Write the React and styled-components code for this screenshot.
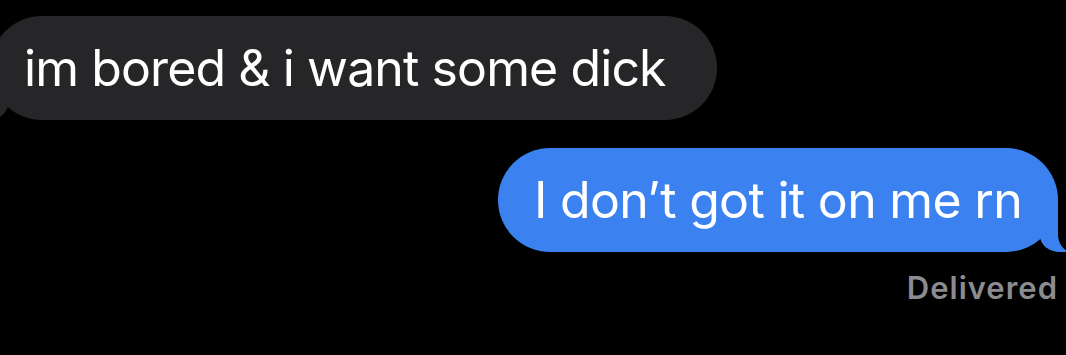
import React from "react";
import styled, { createGlobalStyle } from "styled-components";

const GlobalStyle = createGlobalStyle`
	html, body {
		margin: 0;
		padding: 0;
		background: #000;
	}
	body {
		font-family: Inter, "Noto Sans", "Liberation Sans", sans-serif;
		-webkit-font-smoothing: antialiased;
	}
`;

const Thread = styled.div`
	width: 1066px;
	height: 355px;
	overflow: hidden;
	background: #000;
	display: flex;
	flex-direction: column;
	padding-top: 16px;
	box-sizing: border-box;
`;

const Bubble = styled.div`
	position: relative;
	display: flex;
	align-items: center;
	height: 104px;
	box-sizing: border-box;
	border-radius: 52px;
	font-size: 50px;
	color: #fff;
	white-space: nowrap;
	letter-spacing: ${(p) => (p.$sent ? "-0.7px" : "-0.9px")};
	background: ${(p) => (p.$sent ? "#3b82f0" : "#262628")};
	align-self: ${(p) => (p.$sent ? "flex-end" : "flex-start")};
	margin: ${(p) => (p.$sent ? "28px 8px 0 0" : "0 0 0 -10px")};
	padding: ${(p) => (p.$sent ? "0 36px 0 36px" : "0 51px 0 34px")};

	/* tail */
	&::before {
		content: "";
		position: absolute;
		bottom: 0;
		width: 32px;
		height: 52px;
		background: inherit;
		${(p) =>
			p.$sent
				? "right: -14px; border-bottom-left-radius: 20px 16px;"
				: "left: -14px; border-bottom-right-radius: 20px 16px;"}
	}

	/* carve the tail out */
	&::after {
		content: "";
		position: absolute;
		bottom: 0;
		width: 40px;
		height: 52px;
		background: #000;
		${(p) =>
			p.$sent
				? "right: -40px; border-bottom-left-radius: 14px 18px;"
				: "left: -40px; border-bottom-right-radius: 14px 18px;"}
	}
`;

const Status = styled.div`
	align-self: flex-end;
	margin: 17px 8px 0 0;
	font-size: 31px;
	font-weight: 600;
	color: #8b8b90;
	letter-spacing: 1px;
`;

const App = () => {
	return (
		<>
			<GlobalStyle />
			<Thread>
				<Bubble>im bored &amp; i want some dick</Bubble>
				<Bubble $sent>I don’t got it on me rn</Bubble>
				<Status>Delivered</Status>
			</Thread>
		</>
	);
};

export default App;
